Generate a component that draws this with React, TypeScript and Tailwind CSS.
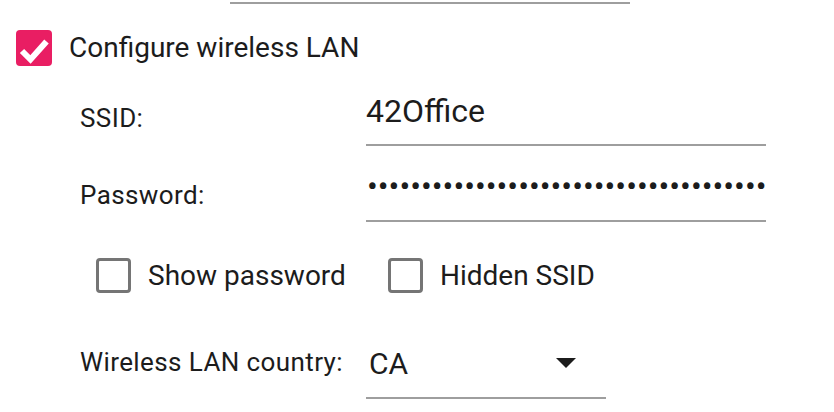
import React from "react";

function CheckedBox() {
  return (
    <div className="w-[36px] h-[36px] rounded-[4px] bg-[#e91e63] flex items-center justify-center shrink-0">
      <svg width="36" height="36" viewBox="0 0 36 36">
        <polyline points="6,21 14.5,29.5 30.5,11.5" fill="none" stroke="#ffffff" strokeWidth="6" strokeLinecap="butt" strokeLinejoin="miter" />
      </svg>
    </div>
  );
}

function EmptyBox() {
  return <div className="w-[35px] h-[35px] rounded-[4px] border-[3px] border-[#757575] bg-white shrink-0" />;
}

export default function App() {
  const dots = "•".repeat(37);
  return (
    <div className="w-[834px] h-[412px] bg-white overflow-hidden text-[#1c1c1c] font-['Roboto',sans-serif]">
      <div className="ml-[230px] mt-[2px] w-[400px] h-[2px] bg-[#9e9e9e]" />

      <div className="mt-[26px] pl-[16px] flex items-center gap-[17px]">
        <CheckedBox />
        <span className="text-[28px] leading-none">Configure wireless LAN</span>
      </div>

      <div className="mt-[28px] flex items-start">
        <div className="w-[366px] pl-[80px] pt-[11px] text-[26px] leading-none tracking-[0.4px]">SSID:</div>
        <div className="w-[400px] h-[52px] border-b-2 border-[#9e9e9e] pt-[1px] text-[32px] leading-none">42Office</div>
      </div>

      <div className="mt-[20px] flex items-start">
        <div className="w-[366px] pl-[80px] pt-[16px] text-[26px] leading-none tracking-[0.4px]">Password:</div>
        <div className="w-[400px] h-[56px] border-b-2 border-[#9e9e9e] pt-[4px] text-[32px] leading-none overflow-hidden whitespace-nowrap pl-[1px]">
          {dots}
        </div>
      </div>

      <div className="mt-[36px] pl-[96px] flex items-center">
        <div className="w-[292px] flex items-center gap-[17px]">
          <EmptyBox />
          <span className="text-[28px] leading-none">Show password</span>
        </div>
        <div className="flex items-center gap-[17px]">
          <EmptyBox />
          <span className="text-[28px] leading-none">Hidden SSID</span>
        </div>
      </div>

      <div className="mt-[47px] flex items-start">
        <div className="w-[366px] pl-[80px] pt-[9px] text-[26px] leading-none tracking-[0.4px]">Wireless LAN country:</div>
        <div className="relative w-[240px] h-[59px] border-b-2 border-[#9e9e9e] pt-[9px] pl-[3px] text-[30px] leading-none">
          CA
          <svg className="absolute left-[190px] top-[18px]" width="20" height="10" viewBox="0 0 20 10">
            <polygon points="0,0 20,0 10,10" fill="#1c1c1c" />
          </svg>
        </div>
      </div>
    </div>
  );
}
